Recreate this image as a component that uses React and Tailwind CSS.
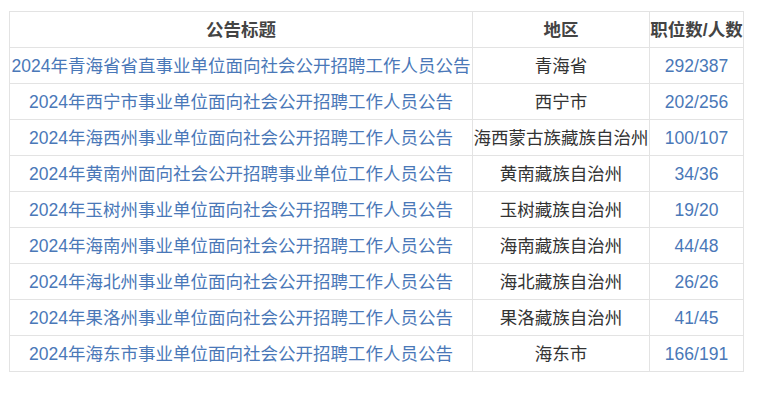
import React from "react";

const rows = [
  ["2024年青海省省直事业单位面向社会公开招聘工作人员公告", "青海省", "292/387"],
  ["2024年西宁市事业单位面向社会公开招聘工作人员公告", "西宁市", "202/256"],
  ["2024年海西州事业单位面向社会公开招聘工作人员公告", "海西蒙古族藏族自治州", "100/107"],
  ["2024年黄南州面向社会公开招聘事业单位工作人员公告", "黄南藏族自治州", "34/36"],
  ["2024年玉树州事业单位面向社会公开招聘工作人员公告", "玉树藏族自治州", "19/20"],
  ["2024年海南州事业单位面向社会公开招聘工作人员公告", "海南藏族自治州", "44/48"],
  ["2024年海北州事业单位面向社会公开招聘工作人员公告", "海北藏族自治州", "26/26"],
  ["2024年果洛州事业单位面向社会公开招聘工作人员公告", "果洛藏族自治州", "41/45"],
  ["2024年海东市事业单位面向社会公开招聘工作人员公告", "海东市", "166/191"],
];

export default function App() {
  return (
    <div className="bg-white w-[776px] h-[393px] pt-[11px] pl-[9px]" style={{ fontFamily: '"Liberation Sans", "Noto Sans CJK SC", sans-serif' }}>
      <table className="border-collapse text-[17.5px] leading-[22px] table-fixed w-[734px]">
        <thead>
          <tr className="h-[36px]">
            <th className="border border-[#e3e3e3] w-[463px] p-0 text-center font-bold text-[#444]">公告标题</th>
            <th className="border border-[#e3e3e3] w-[177px] p-0 text-center font-bold text-[#444]">地区</th>
            <th className="border border-[#e3e3e3] w-[94px] p-0 text-center font-bold text-[#444] whitespace-nowrap">职位数/人数</th>
          </tr>
        </thead>
        <tbody>
          {rows.map((r, i) => (
            <tr key={i} className="h-[36px]">
              <td className="border border-[#e3e3e3] p-0 text-center text-[#4a78b8] whitespace-nowrap">{r[0]}</td>
              <td className="border border-[#e3e3e3] p-0 text-center text-[#333] whitespace-nowrap">{r[1]}</td>
              <td className="border border-[#e3e3e3] p-0 text-center text-[#4a78b8]">{r[2]}</td>
            </tr>
          ))}
        </tbody>
      </table>
    </div>
  );
}
